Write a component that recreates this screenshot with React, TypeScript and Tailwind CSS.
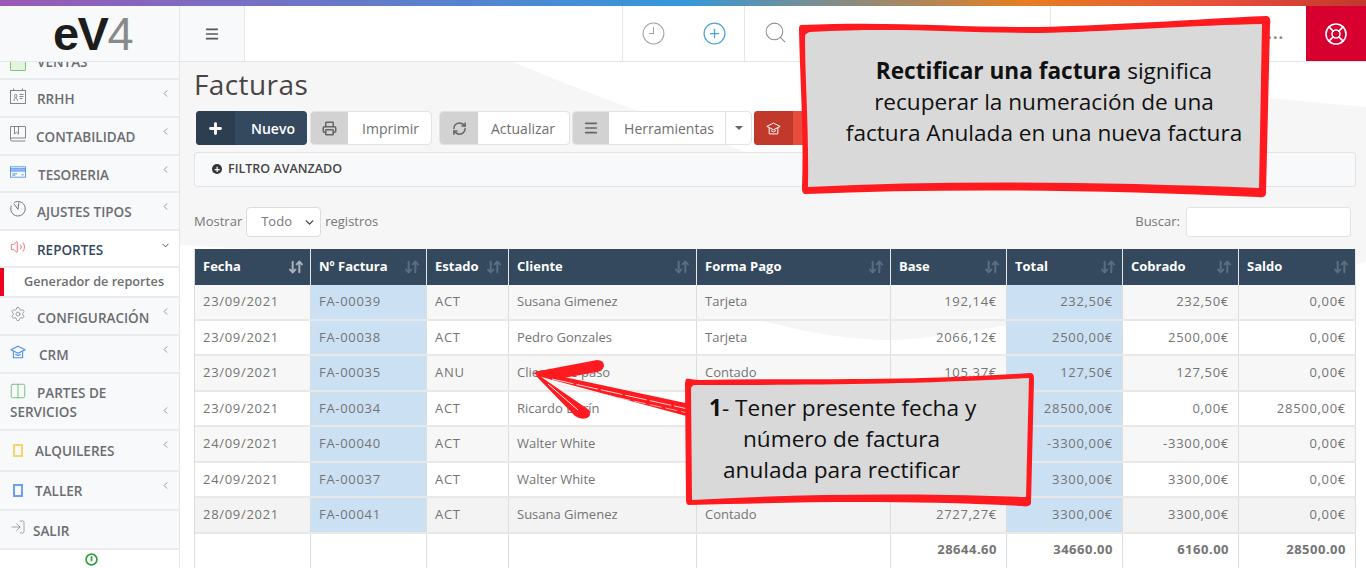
import React from "react";
import { Menu, Plus, Printer, RefreshCw, Search, CirclePlus, Clock9, LifeBuoy, ChevronLeft, ChevronDown, Settings, Volume2, LogIn, Columns2, ArrowDownUp } from "lucide-react";

const rows = [
  ["23/09/2021", "FA-00039", "ACT", "Susana Gimenez", "Tarjeta", "192,14€", "232,50€", "232,50€", "0,00€"],
  ["23/09/2021", "FA-00038", "ACT", "Pedro Gonzales", "Tarjeta", "2066,12€", "2500,00€", "2500,00€", "0,00€"],
  ["23/09/2021", "FA-00035", "ANU", "Cliente de paso", "Contado", "105,37€", "127,50€", "127,50€", "0,00€"],
  ["23/09/2021", "FA-00034", "ACT", "Ricardo Darín", "Contado", "23553,72€", "28500,00€", "0,00€", "28500,00€"],
  ["24/09/2021", "FA-00040", "ACT", "Walter White", "Contado", "-2727,27€", "-3300,00€", "-3300,00€", "0,00€"],
  ["24/09/2021", "FA-00037", "ACT", "Walter White", "Contado", "2727,27€", "3300,00€", "3300,00€", "0,00€"],
  ["28/09/2021", "FA-00041", "ACT", "Susana Gimenez", "Contado", "2727,27€", "3300,00€", "3300,00€", "0,00€"],
];
const heads = ["Fecha", "Nº Factura", "Estado", "Cliente", "Forma Pago", "Base", "Total", "Cobrado", "Saldo"];
const widths = ["w-[116px]", "w-[116px]", "w-[82px]", "w-[188px]", "w-[194px]", "w-[116px]", "w-[116px]", "w-[116px]", "w-[117px]"];

function Hat({ className, size = 18 }: { className: string; size?: number }) {
  return (
    <svg width={size} height={size} viewBox="0 0 18 18" fill="none" stroke="currentColor" strokeWidth="1.2" strokeLinejoin="round" className={className}>
      <path d="M1 6.5 9 2.5l8 4-8 4z" />
      <path d="M3.8 8.2V15.5h10.4V8.2" />
      <path d="M6 11.5 9 13l3-1.5" />
    </svg>
  );
}

function Badge() {
  return (
    <svg width="16" height="16" viewBox="0 0 16 16" fill="none" stroke="#77797c" strokeWidth="0.9">
      <rect x="0.5" y="2.5" width="15" height="13" />
      <path d="M3.5 2.5V0.5M12.5 2.5V0.5" />
      <path d="M4 13c0-2 .8-2.5 1.5-3-.8-.8-1-2-.8-3 .3-1 1.8-1 2.1 0 .2 1 0 2.2-.8 3 .7.5 1.5 1 1.5 3" />
      <path d="M9.5 6.5h4M9.5 8.5h4M9.5 10.5h3" />
    </svg>
  );
}

function Book() {
  return (
    <svg width="16" height="16" viewBox="0 0 16 16" fill="none" stroke="#77797c" strokeWidth="0.9">
      <path d="M0.5 13V0.5h15V12H2a1.5 1.5 0 0 0 0 3h13.5" />
      <path d="M4.5 0.5V8l2-1.8L8.5 8V0.5" />
    </svg>
  );
}

function Card() {
  return (
    <svg width="17" height="12" viewBox="0 0 17 12" fill="none" stroke="#4a8cf0" strokeWidth="0.9">
      <rect x="0.5" y="0.5" width="16" height="11" />
      <rect x="0.5" y="2.5" width="16" height="2.5" fill="#9fc3fa" />
      <path d="M2.5 8h5M2.5 9.5h3M12 9h2.5" />
    </svg>
  );
}

function Watch() {
  return (
    <svg width="16" height="16" viewBox="0 0 16 16" fill="none" stroke="#666" strokeWidth="0.9" strokeLinecap="round">
      <path d="M4.5 1.3A7.3 7.3 0 1 1 1.2 5" />
      <path d="M4 3 8 8.4 8.8 1.8" />
    </svg>
  );
}

function SideItem({ icon, label, h, gap, chevron = true, iconClass = "mb-[4px]" }: { icon: React.ReactNode; label: React.ReactNode; h: string; gap: string; chevron?: boolean; iconClass?: string }) {
  return (
    <div className={`relative flex items-center border-b-2 border-[#e9ebef] pl-[10px] text-[13.5px] text-[#6b6d70] ${h}`}>
      <span className={`flex w-[16px] shrink-0 justify-center ${iconClass}`}>{icon}</span>
      <span className={`pt-[2px] ${gap}`}>{label}</span>
      {chevron && <ChevronLeft className="absolute right-[8px] top-[8px] text-[#8a8d92]" size={11} />}
    </div>
  );
}

function ToolBtn({ icon, label, iw, w, labelClass = "pl-[2px]" }: { icon: React.ReactNode; label: string; iw: string; w: string; labelClass?: string }) {
  return (
    <div className={`flex h-[34px] overflow-hidden rounded-[4px] border border-[#e3e3e3] bg-white text-[14px] text-[#707070] ${w}`}>
      <span className={`flex items-center justify-center bg-[#d2d2d2] ${iw}`}>{icon}</span>
      <span className={`flex flex-1 items-center justify-center ${labelClass}`}>{label}</span>
    </div>
  );
}

function Sort({ active = false }: { active?: boolean }) {
  return <ArrowDownUp size={16} strokeWidth={3} className={`absolute right-[6px] top-[10px] ${active ? "text-[#a9b3bf]" : "text-[#5d6e80]"}`} />;
}

export default function App() {
  return (
    <div className="relative h-[568px] w-[1366px] overflow-hidden bg-white font-['Open_Sans',sans-serif]">
      <div className="h-[6px] bg-[linear-gradient(to_right,#9b59b6_0%,#3498db_50%,#e67e22_75%,#e74c3c_90%,#c0392b_100%)]" />
      <header className="relative z-10 flex h-[56px] border-b border-[#e4e5e7] bg-white">
        <div className="flex w-[180px] items-center justify-center overflow-hidden border-r border-[#e4e5e7] bg-[#f8f9fb] pl-[6px]">
          <span className="flex items-baseline font-['Liberation_Sans',sans-serif] text-[47px] font-bold leading-none tracking-[-1.5px] text-[#1d1d1b]">
            eV<span className="font-normal text-[#8a8a8a]">4</span>
          </span>
        </div>
        <div className="flex w-[65px] items-center justify-center border-r border-[#e4e5e7] bg-[#f8f9fb]">
          <Menu size={16} strokeWidth={2.5} className="text-[#555]" />
        </div>
        <div className="flex-1" />
        <div className="flex w-[122px] items-center gap-[36px] border-l border-[#e4e5e7] pl-[18px]">
          <Clock9 size={25} strokeWidth={1} className="text-[#a5a5a5]" />
          <CirclePlus size={25} strokeWidth={1.2} className="text-[#4aa3e0]" />
        </div>
        <div className="flex w-[306px] items-start border-l border-[#e4e5e7] pl-[18px] pt-[14px]">
          <Search size={25} strokeWidth={1} className="text-[#8f8f8f]" />
        </div>
        <div className="flex w-[256px] items-center justify-end border-l border-[#e4e5e7] pb-[2px] pr-[22px] text-[16px] font-bold tracking-[1px] text-[#8b8b8b]">...</div>
        <div className="flex w-[60px] items-center justify-center bg-[#d7002f]">
          <LifeBuoy size={24} strokeWidth={1.6} className="text-white" />
        </div>
      </header>

      <div className="flex h-[506px]">
        <aside className="w-[180px] shrink-0 overflow-hidden border-r border-[#e4e5e7] bg-[#f8f9fb] font-semibold">
          <div className="h-[18px] overflow-hidden border-b-2 border-[#e9ebef] pl-[10px] text-[13.5px] text-[#6b6d70]">
            <div className="-mt-[9px] flex items-end">
              <span className="mr-[11px] block h-[14px] w-[16px] rounded-[1px] border border-[#7fca6c] bg-[#e4f4df]" />
              <span className="leading-[18px]">VENTAS</span>
            </div>
          </div>
          <SideItem h="h-[38px]" gap="ml-[11px]" label="RRHH" icon={<Badge />} />
          <SideItem h="h-[38px]" gap="ml-[10px]" label="CONTABILIDAD" icon={<Book />} />
          <SideItem h="h-[37px]" gap="ml-[12px] translate-y-[1px]" label="TESORERIA" icon={<Card />} />
          <SideItem h="h-[38px]" gap="ml-[11px]" label="AJUSTES TIPOS" icon={<Watch />} />
          <div className="relative flex h-[37px] items-center border-b-2 border-[#e9ebef] bg-white pl-[10px] text-[13.5px] text-[#34495e]">
            <span className="mb-[4px] flex w-[16px] justify-center"><Volume2 size={20} strokeWidth={1} className="text-[#f2303f]" /></span>
            <span className="ml-[11px] translate-y-[1px] pt-[2px]">REPORTES</span>
            <ChevronDown className="absolute right-[8px] top-[9px] text-[#34495e]" size={11} />
          </div>
          <div className="relative flex h-[30px] items-center border-b-2 border-[#e9ebef] bg-white pb-[1px] pl-[24px] text-[12.7px] text-[#6b6d70]">
            <span className="absolute left-0 top-0 h-[28px] w-[4px] bg-[#f00020]" />
            Generador de reportes
          </div>
          <SideItem h="h-[38px]" gap="ml-[11px] translate-y-[1px]" label="CONFIGURACIÓN" icon={<Settings size={18} strokeWidth={1} className="text-[#77797c]" />} />
          <SideItem h="h-[38px]" gap="ml-[13px]" label="CRM" icon={<Hat size={18} className="text-[#4a8cf0]" />} />
          <div className="relative h-[57px] border-b-2 border-[#e9ebef] pl-[10px] pt-[10px] text-[13.5px] leading-[19px] text-[#6b6d70]">
            <Columns2 size={18} strokeWidth={1} className="absolute left-[9px] top-[8px] text-[#52b05c]" />
            <div className="pl-[27px]">PARTES DE</div>
            <div>SERVICIOS</div>
            <ChevronLeft className="absolute right-[8px] top-[31px] text-[#8a8d92]" size={11} />
          </div>
          <SideItem h="h-[41px]" gap="ml-[9px]" iconClass="mb-0" label="ALQUILERES" icon={<span className="block h-[13px] w-[10px] border-2 border-[#f7d56b]" />} />
          <SideItem h="h-[39px]" gap="ml-[9px]" iconClass="mb-0" label="TALLER" icon={<span className="block h-[13px] w-[10px] border-2 border-[#6b9ff5]" />} />
          <SideItem h="h-[39px]" gap="ml-[7px] translate-y-[1px]" chevron={false} iconClass="mb-[6px]" label="SALIR" icon={<LogIn size={16} strokeWidth={1} className="text-[#77797c]" />} />
          <div className="flex h-[18px] items-center justify-center bg-white pl-[4px]">
            <svg width="13" height="13" viewBox="0 0 13 13" fill="none" stroke="#2e9e3e" strokeWidth="1.7">
              <circle cx="6.5" cy="6.5" r="5.4" />
              <path d="M6.5 3.2v5" />
            </svg>
          </div>
        </aside>

        <main className="relative flex-1 overflow-hidden px-[14px]">
          <svg className="absolute inset-0" width="1186" height="506" viewBox="180 62 1186 506">
            <path d="M180 62H513C590 95 680 125 760 158L1000 190L1268 98L1366 107V262C1250 285 1120 310 1006 326C950 333 920 341 880 340C830 338 790 328 750 318C650 295 500 262 180 245Z" fill="#f6f6f6" />
          </svg>
          <div className="relative">
            <h1 className="h-[49px] text-[28px] leading-[44px] tracking-[0.4px] text-[#4a4545]">Facturas</h1>
            <div className="ml-[2px] flex h-[34px]">
              <div className="mr-[3px] flex h-[34px] w-[111px] overflow-hidden rounded-[4px] bg-[#34495e] text-[14px] font-semibold text-white">
                <span className="flex w-[39px] items-center justify-center bg-[#2c3e50]"><Plus size={17} strokeWidth={4} /></span>
                <span className="flex flex-1 items-center justify-center pl-[4px]">Nuevo</span>
              </div>
              <ToolBtn w="mr-[7px] w-[122px]" iw="w-[37px]" label="Imprimir" icon={<Printer size={15} strokeWidth={2.4} className="text-[#666]" />} />
              <ToolBtn w="mr-[2px] w-[131px]" iw="w-[38px]" labelClass="pr-[1px]" label="Actualizar" icon={<RefreshCw size={15} strokeWidth={2.4} className="text-[#666]" />} />
              <div className="mr-[2px] flex h-[34px] w-[180px] overflow-hidden rounded-[4px] border border-[#e3e3e3] bg-white text-[14px] text-[#707070]">
                <span className="flex w-[36px] items-center justify-center bg-[#d2d2d2]"><Menu size={16} strokeWidth={2.5} className="text-[#666]" /></span>
                <span className="flex w-[117px] items-center justify-center border-r border-[#e3e3e3] pl-[4px]">Herramientas</span>
                <span className="flex flex-1 items-center justify-center"><span className="border-x-[4px] border-t-[4px] border-x-transparent border-t-[#666]" /></span>
              </div>
              <div className="flex h-[34px] w-[60px] overflow-hidden rounded-[4px] bg-[#e74c3c]">
                <span className="flex w-[39px] items-center justify-center bg-[#c0392b]"><Hat size={15} className="text-white" /></span>
              </div>
            </div>
            <div className="mt-[7px] flex h-[35px] w-[1162px] items-center rounded-[3px] border border-[#e3e3e3] bg-[#f8f9fb] pb-[1px] pl-[17px] text-[12.5px] font-semibold text-[#444]">
              <span className="mr-[6px] flex h-[10px] w-[10px] items-center justify-center rounded-full bg-[#333] text-[10px] font-bold leading-none text-white">+</span>
              FILTRO AVANZADO
            </div>
            <div className="mt-[19px] flex h-[32px] w-[1157px] items-center justify-between text-[13px] text-[#777]">
              <div className="flex items-center gap-[4px]">
                <span>Mostrar</span>
                <span className="flex h-[30px] w-[75px] items-center justify-between rounded-[4px] border border-[#ddd] bg-white pl-[14px] pr-[4px]">Todo<ChevronDown size={13} strokeWidth={2.5} className="text-[#444]" /></span>
                <span>registros</span>
              </div>
              <div className="flex items-center gap-[6px]">
                <span>Buscar:</span>
                <span className="h-[30px] w-[165px] rounded-[3px] border border-[#e3e3e3] bg-white" />
              </div>
            </div>
            <div className="mt-[11px] w-[1162px] border-l border-[#ddd] text-[13px] text-[#747474]">
              <div className="flex h-[36px] bg-[#34495e] text-[13px] font-bold text-white">
                {heads.map((h, i) => (
                  <div key={h} className={`relative flex items-center border-r border-[#e8e8e8] pb-[1px] pl-[8px] ${widths[i]}`}>
                    {h}
                    <Sort active={i === 0} />
                  </div>
                ))}
              </div>
              {rows.map((r, i) => (
                <div key={r[1]} className={`flex h-[35.5px] border-b-2 border-[#e8e8e8] ${i === 6 ? "bg-[#f3f3f3]" : i % 2 === 0 ? "bg-[#f7f7f7]" : ""}`}>
                  {r.map((c, j) => (
                    <div key={j} className={`flex items-center border-r border-[#ddd] ${widths[j]} ${j >= 5 ? "justify-end pr-[9px]" : "pl-[8px]"} ${j === 3 || j === 4 ? "" : "tracking-[0.7px]"} ${j === 1 || j === 6 ? "bg-[#cbe0f3]" : ""}`}>
                      {c}
                    </div>
                  ))}
                </div>
              ))}
              <div className="flex h-[40px] font-bold tracking-[0.5px]">
                {["", "", "", "", "", "28644.60", "34660.00", "6160.00", "28500.00"].map((c, j) => (
                  <div key={j} className={`flex items-center justify-end border-r border-[#ddd] pb-[7px] pr-[9px] ${widths[j]}`}>{c}</div>
                ))}
              </div>
            </div>
          </div>
        </main>
      </div>

      {/* annotations */}
      <svg className="absolute left-0 top-0 z-20" width="1366" height="568" viewBox="0 0 1366 568">
        <path d="M534 372L597 360Q604 360 604 366Q603 371 597 372L552 380Z" fill="#ff1a1f" />
        <path d="M534 372L589 410Q592 415 587 418Q581 420 575 416L538 378Z" fill="#ff1a1f" />
        <path d="M536 371L690 404V417L538 376Z" fill="#ff1a1f" />
        <path d="M552 379L688 409" stroke="#ffffff" strokeWidth="0.8" strokeDasharray="22 3" fill="none" />
        <path d="M556 384L688 413" stroke="#ffe0e0" strokeWidth="0.7" strokeDasharray="12 4" fill="none" />
        <path d="M548 384L578 410" stroke="#ffffff" strokeWidth="0.9" fill="none" />
        <path d="M801 25C900 21 960 28 1040 27C1100 26 1200 19 1266 16C1270 16 1271 20 1270 25L1266 193C1266 197 1262 198 1258 197C1100 190 950 188 806 194C803 194 802 192 802 188C804 130 800 80 799 30C799 27 799 26 801 25Z" fill="#ff1a1f" />
        <path d="M810 32C900 27 960 33 1040 33C1100 32 1200 25 1262 24L1259 188C1100 182 950 180 808 187C809 130 805 80 805 36C805 34 807 33 810 32Z" fill="#d9d9d9" />
        <path d="M686 379C690 378 693 380 700 380C800 378 900 382 1030 373C1033 373 1034 375 1034 379L1031 503C1031 506 1026 507 1022 506C900 500 800 502 689 505C687 505 686 503 686 500L685 383Z" fill="#ff1a1f" />
        <path d="M694 385C800 385 900 385 1029 378L1026 497C900 493 800 494 692 500L691 389C691 387 692 386 694 385Z" fill="#d9d9d9" />
      </svg>
      <div className="absolute left-[817px] top-[55px] z-30 w-[454px] text-center text-[22.6px] leading-[31px] text-[#111]">
        <div><b>Rectificar una factura</b> significa</div>
        <div>recuperar la numeración de una</div>
        <div>factura Anulada en una nueva factura</div>
      </div>
      <div className="absolute left-[694px] top-[392px] z-30 w-[330px] text-[22.6px] leading-[31px] text-[#111]">
        <div className="pl-[15px]"><b>1</b>- Tener presente fecha y</div>
        <div className="pl-[49px]">número de factura</div>
        <div className="pl-[29px]">anulada para rectificar</div>
      </div>
    </div>
  );
}
